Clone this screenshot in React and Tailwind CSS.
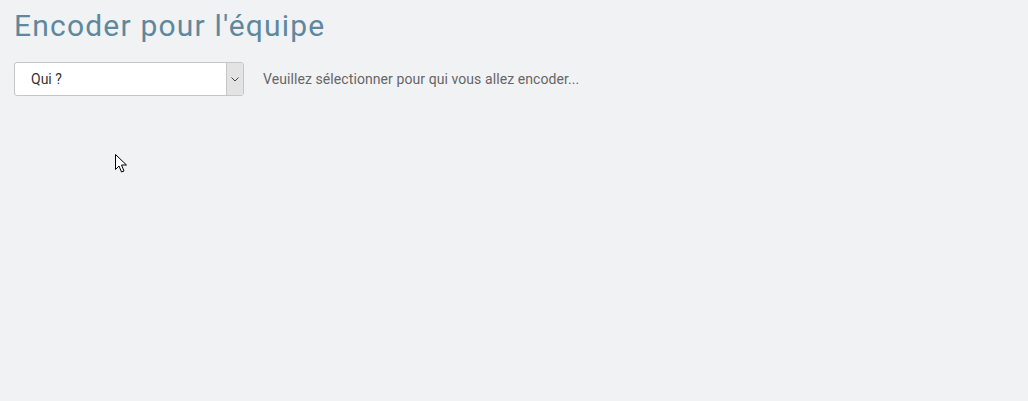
export default function App() {
  return (
    <div className="relative min-h-[401px] w-full bg-[#f1f2f4] px-[14px] pt-[8px] font-['Roboto',sans-serif]">
      <h1 className="text-[30px] leading-[36px] tracking-[1.2px] text-[#5d889e] font-normal">Encoder pour l'équipe</h1>
      <div className="mt-[18px] flex items-center gap-[19px]">
        <div className="flex h-[34px] w-[230px] overflow-hidden rounded-[3px] border border-[#c6c6c6] bg-white">
          <div className="flex flex-1 items-center pl-[16px] text-[14px] text-[#333]">Qui ?</div>
          <div className="flex w-[17px] items-center justify-center border-l border-[#c6c6c6] bg-[#e3e3e3]">
            <svg width="8" height="5" viewBox="0 0 8 5" fill="none">
              <path d="M0.5 0.5 L4 4 L7.5 0.5" stroke="#444" strokeWidth="1" />
            </svg>
          </div>
        </div>
        <span className="text-[14px] tracking-[0.08px] text-[#666]">Veuillez sélectionner pour qui vous allez encoder...</span>
      </div>
      <svg className="absolute left-[115px] top-[154px]" width="13" height="20" viewBox="0 0 13 20">
        <path d="M0.5 0.5 L0.5 15.5 L4 12 L6.5 18 L9 17 L6.5 11 L11.5 11 Z" fill="#fff" stroke="#000" strokeWidth="1" strokeLinejoin="miter" />
      </svg>
    </div>
  );
}
